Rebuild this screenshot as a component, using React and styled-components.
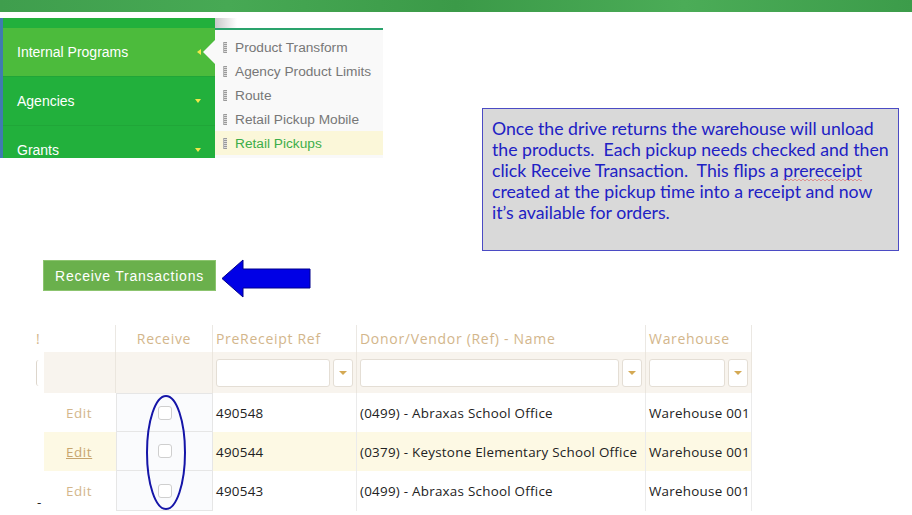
import React from "react";
import styled, { createGlobalStyle } from "styled-components";

const GlobalStyle = createGlobalStyle`
  html, body {
    margin: 0;
    padding: 0;
    background: #ffffff;
  }
`;

const Slide = styled.div`
  position: relative;
  width: 912px;
  height: 515px;
  overflow: hidden;
  background: #ffffff;
`;

const Band = styled.div`
  height: 12px;
  background: linear-gradient(
    90deg,
    #3f9e4d 0%,
    #47a954 25%,
    #3b9a48 50%,
    #4bac57 75%,
    #3c9c4a 100%
  );
`;

const TopRow = styled.div`
  display: flex;
  align-items: flex-start;
  margin-top: 6px;
`;

/* ---- menu screenshot ---- */

const Menu = styled.div`
  display: grid;
  grid-template-columns: 215px 168px;
  height: 140px;
  overflow: hidden;
  font-family: "Liberation Sans", Arial, sans-serif;
  font-size: 14px;
`;

const SideNav = styled.div`
  display: flex;
  flex-direction: column;
  background: #22b03c;
  border-left: 3px solid #3f7bb0;
`;

const NavTop = styled.div`
  height: 10px;
  flex: none;
`;

const NavItem = styled.div`
  position: relative;
  display: flex;
  align-items: center;
  justify-content: space-between;
  flex: none;
  height: 48px;
  padding: 0 14px 0 14px;
  color: #ffffff;
  background: ${(p) => (p.$active ? "#4cbb3c" : "#22b03c")};
  border-bottom: 1px solid #20a638;
`;

const Caret = styled.span`
  width: 0;
  height: 0;
  border-style: solid;
  ${(p) =>
    p.$left
      ? "border-width: 3.5px 4px 3.5px 0; border-color: transparent #f2e84a transparent transparent;"
      : "border-width: 4px 3.5px 0 3.5px; border-color: #f2e84a transparent transparent transparent;"}
`;

const Notch = styled.span`
  position: absolute;
  right: 0;
  top: 12px;
  width: 0;
  height: 0;
  border-style: solid;
  border-width: 12px 12px 12px 0;
  border-color: transparent #f9f9f9 transparent transparent;
`;

const SubPanel = styled.div`
  display: flex;
  flex-direction: column;
`;

const SubShadow = styled.div`
  height: 10px;
  flex: none;
  background: linear-gradient(90deg, #c9c9c9 0px, #ffffff 22px);
`;

const SubList = styled.div`
  flex: 1;
  background: #f9f9f9;
  border-top: 2px solid #2aa36c;
  padding-top: 5px;
`;

const SubItem = styled.div`
  display: flex;
  align-items: center;
  height: 24px;
  padding-left: 8px;
  font-size: 13.7px;
  color: ${(p) => (p.$active ? "#3cae4a" : "#777777")};
  background: ${(p) => (p.$active ? "#fbf7d9" : "transparent")};
`;

const Grip = styled.span`
  display: inline-block;
  width: 3px;
  height: 11px;
  margin-right: 8px;
  background: repeating-linear-gradient(
    180deg,
    #9a9a9a 0px,
    #9a9a9a 1px,
    #dcdcdc 1px,
    #dcdcdc 2px
  );
  border-left: 1px solid #b5b5b5;
`;

/* ---- callout ---- */

const Callout = styled.div`
  box-sizing: border-box;
  width: 417px;
  height: 143px;
  margin: 90px 0 0 99px;
  padding: 9px 0 0 9px;
  background: #d9d9d9;
  border: 1px solid #4b4bc4;
  color: #2121c4;
  font-family: Lato, "Open Sans", sans-serif;
  font-size: 17.7px;
  line-height: 21px;
  white-space: nowrap;
`;

const Squiggle = styled.span`
  background-image: radial-gradient(circle at 2px 0px, transparent 1px, #e05050 1.2px, transparent 2px);
  background-size: 4px 2px;
  background-repeat: repeat-x;
  background-position: 0 100%;
`;

/* ---- action row ---- */

const ActionRow = styled.div`
  display: flex;
  align-items: flex-start;
  gap: 5px;
  margin-top: 8px;
  padding-left: 43px;
`;

const ReceiveButton = styled.button`
  box-sizing: border-box;
  width: 173px;
  height: 31px;
  margin-top: 1px;
  background: #6ab04c;
  border: 1px solid #8cc46f;
  color: #ffffff;
  font-family: "Liberation Sans", Arial, sans-serif;
  font-size: 14px;
  letter-spacing: 0.75px;
  cursor: pointer;
`;

/* ---- grid ---- */

const Grid = styled.div`
  margin: 27px 0 0 35px;
  width: 717px;
  font-family: "Open Sans", sans-serif;
  font-size: 13.4px;
  letter-spacing: 0.25px;
`;

const Row = styled.div`
  display: grid;
  grid-template-columns: 9px 72px 97px 144px 289px 106px;
  height: ${(p) => p.$h}px;
`;

const HeadCell = styled.div`
  display: flex;
  align-items: center;
  justify-content: ${(p) => (p.$center ? "center" : "flex-start")};
  padding-left: ${(p) => (p.$center ? 0 : 3)}px;
  color: #d3b68b;
  font-size: 14px;
  letter-spacing: 0.7px;
  border-right: ${(p) => (p.$line ? "1px solid #ebe8e3" : "none")};
  overflow: hidden;
  white-space: nowrap;
`;

const FilterCell = styled.div`
  display: flex;
  align-items: center;
  gap: 3px;
  padding: 0 3px;
  background: ${(p) => (p.$stub ? "#ffffff" : "#f8f4ee")};
  border-right: ${(p) => (p.$line ? "1px solid #ebe6de" : "none")};
  overflow: hidden;
`;

const FilterInput = styled.div`
  flex: 1;
  height: 26px;
  background: #ffffff;
  border: 1px solid #e4ded5;
  border-radius: 3px;
`;

const StubInput = styled.div`
  width: 12px;
  height: 26px;
  margin-left: -2px;
  border-left: 1px solid #ddd6cc;
  border-radius: 3px 0 0 3px;
`;

const DropButton = styled.div`
  display: flex;
  align-items: center;
  justify-content: center;
  flex: none;
  width: 18px;
  height: 26px;
  background: #ffffff;
  border: 1px solid #e4ded5;
  border-radius: 3px;

  &::after {
    content: "";
    border-style: solid;
    border-width: 4px 4px 0 4px;
    border-color: #d4a954 transparent transparent transparent;
  }
`;

const Cell = styled.div`
  display: flex;
  align-items: center;
  justify-content: ${(p) => (p.$center ? "center" : "flex-start")};
  padding-left: ${(p) => (p.$center ? 0 : 3)}px;
  color: #222222;
  white-space: nowrap;
  overflow: hidden;
  background: ${(p) => (p.$hl ? "#fdf9e4" : "transparent")};
  border-right: ${(p) => (p.$line ? "1px solid #ebebeb" : "none")};
`;

const BoxCell = styled.div`
  display: flex;
  align-items: center;
  justify-content: center;
  background: #fafbfd;
  border: 1px solid #e6e6e6;
  border-top: ${(p) => (p.$first ? "1px solid #e6e6e6" : "none")};
`;

const CheckBox = styled.span`
  box-sizing: border-box;
  width: 14px;
  height: 14px;
  margin-left: 1px;
  background: #ffffff;
  border: 1px solid #cfcfcf;
  border-radius: 3px;
`;

const EditLink = styled.a`
  color: ${(p) => (p.$hover ? "#c7a56e" : "#d3b68b")};
  text-decoration: ${(p) => (p.$hover ? "underline" : "none")};
  letter-spacing: 0.6px;
  margin-left: 19px;
  cursor: pointer;
`;

const Ellipse = styled.svg`
  position: absolute;
  left: 145px;
  top: 394px;
`;

const rows = [
  { ref: "490548", donor: "(0499) - Abraxas School Office", h: 39 },
  { ref: "490544", donor: "(0379) - Keystone Elementary School Office", hl: true, h: 39 },
  { ref: "490543", donor: "(0499) - Abraxas School Office", h: 40 },
];

const subItems = [
  "Product Transform",
  "Agency Product Limits",
  "Route",
  "Retail Pickup Mobile",
  "Retail Pickups",
];

export default function App() {
  return (
    <Slide>
      <GlobalStyle />
      <Band />

      <TopRow>
        <Menu>
          <SideNav>
            <NavTop />
            <NavItem $active>
              Internal Programs
              <Caret $left />
              <Notch />
            </NavItem>
            <NavItem>
              Agencies
              <Caret />
            </NavItem>
            <NavItem>
              Grants
              <Caret />
            </NavItem>
          </SideNav>
          <SubPanel>
            <SubShadow />
            <SubList>
              {subItems.map((s, i) => (
                <SubItem key={s} $active={i === subItems.length - 1}>
                  <Grip />
                  {s}
                </SubItem>
              ))}
            </SubList>
          </SubPanel>
        </Menu>

        <Callout>
          Once the drive returns the warehouse will unload
          <br />
          the products.&nbsp; Each pickup needs checked and then
          <br />
          click Receive Transaction.&nbsp; This flips a <Squiggle>prereceipt</Squiggle>
          <br />
          created at the pickup time into a receipt and now
          <br />
          it’s available for orders.
        </Callout>
      </TopRow>

      <ActionRow>
        <ReceiveButton>Receive Transactions</ReceiveButton>
        <svg width="90" height="39" viewBox="0 0 90 39">
          <polygon
            points="1,19.5 22,1 22,10 89,10 89,29 22,29 22,38"
            fill="#0000e6"
            stroke="#00008c"
            strokeWidth="1"
          />
        </svg>
      </ActionRow>

      <Grid>
        <Row $h={27}>
          <HeadCell style={{ paddingLeft: 1 }}>!</HeadCell>
          <HeadCell $line />
          <HeadCell $center $line>Receive</HeadCell>
          <HeadCell $line>PreReceipt Ref</HeadCell>
          <HeadCell $line>Donor/Vendor (Ref) - Name</HeadCell>
          <HeadCell $line>Warehouse</HeadCell>
        </Row>
        <Row $h={41}>
          <FilterCell $stub>
            <StubInput />
          </FilterCell>
          <FilterCell $line />
          <FilterCell $line />
          <FilterCell $line>
            <FilterInput />
            <DropButton />
          </FilterCell>
          <FilterCell $line>
            <FilterInput />
            <DropButton />
          </FilterCell>
          <FilterCell $line>
            <FilterInput />
            <DropButton />
          </FilterCell>
        </Row>
        {rows.map((r, i) => (
          <Row key={r.ref} $h={r.h}>
            <Cell style={{ paddingLeft: 2, alignItems: "flex-end" }}>
              {i === rows.length - 1 ? "-" : ""}
            </Cell>
            <Cell $hl={r.hl}>
              <EditLink $hover={r.hl}>Edit</EditLink>
            </Cell>
            <BoxCell $first={i === 0}>
              <CheckBox />
            </BoxCell>
            <Cell $hl={r.hl} $line>{r.ref}</Cell>
            <Cell $hl={r.hl} $line>{r.donor}</Cell>
            <Cell $hl={r.hl} $line>Warehouse 001</Cell>
          </Row>
        ))}
      </Grid>

      <Ellipse width="42" height="118" viewBox="0 0 42 118">
        <ellipse cx="21" cy="58.5" rx="19" ry="56.5" fill="none" stroke="#1515a8" strokeWidth="2" />
      </Ellipse>
    </Slide>
  );
}
